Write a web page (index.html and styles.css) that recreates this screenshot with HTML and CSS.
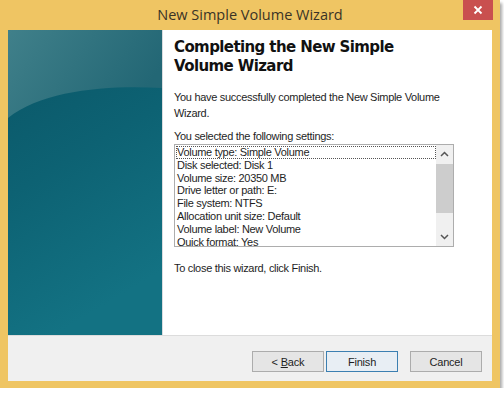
FILE: index.html
```html
<!DOCTYPE html>
<html lang="en">
<head>
    <meta charset="UTF-8">
    <title>New Simple Volume Wizard</title>
    <link rel="stylesheet" href="styles.css">
</head>
<body>

    <div class="window">
        <div class="titlebar">
            <span></span>
            <span class="title">New Simple Volume Wizard</span>
            <button class="close" type="button" aria-label="Close">
                <svg width="10" height="10" viewBox="0 0 10 10">
                    <path d="M1.5 1.5 L8.5 8.5 M8.5 1.5 L1.5 8.5" stroke="#fff" stroke-width="1.8" fill="none"/>
                </svg>
            </button>
        </div>

        <div class="client">
            <div class="main">
                <div class="side">
                    <svg width="154" height="305" viewBox="0 0 154 305" preserveAspectRatio="none">
                        <defs>
                            <linearGradient id="bg" x1="0" y1="0" x2="0.3" y2="1">
                                <stop offset="0" stop-color="#0a5566"/>
                                <stop offset="0.5" stop-color="#0d6273"/>
                                <stop offset="1" stop-color="#137283"/>
                            </linearGradient>
                            <linearGradient id="glow" x1="0" y1="0" x2="1" y2="0.4">
                                <stop offset="0" stop-color="#40808a"/>
                                <stop offset="1" stop-color="#236775"/>
                            </linearGradient>
                        </defs>
                        <rect width="154" height="305" fill="url(#bg)"/>
                        <path d="M0 0 H154 V58 C100 55 35 60 0 88 Z" fill="url(#glow)"/>
                    </svg>
                </div>
                <div class="content">
                    <h1>Completing the New Simple Volume Wizard</h1>
                    <p class="intro">You have successfully completed the New Simple Volume Wizard.</p>
                    <p class="label">You selected the following settings:</p>
                    <div class="listbox">
                        <div class="lines">
                            <div class="line focus">Volume type: Simple Volume</div>
                            <div class="line">Disk selected: Disk 1</div>
                            <div class="line">Volume size: 20350 MB</div>
                            <div class="line">Drive letter or path: E:</div>
                            <div class="line">File system: NTFS</div>
                            <div class="line">Allocation unit size: Default</div>
                            <div class="line">Volume label: New Volume</div>
                            <div class="line">Quick format: Yes</div>
                        </div>
                        <div class="scrollbar">
                            <svg class="arrow" width="9" height="6" viewBox="0 0 9 6">
                                <path d="M1 5 L4.5 1.5 L8 5" stroke="#555" stroke-width="1.5" fill="none"/>
                            </svg>
                            <div class="track"><div class="thumb"></div></div>
                            <svg class="arrow" width="9" height="6" viewBox="0 0 9 6">
                                <path d="M1 1 L4.5 4.5 L8 1" stroke="#555" stroke-width="1.5" fill="none"/>
                            </svg>
                        </div>
                    </div>
                    <p class="finish-note">To close this wizard, click Finish.</p>
                </div>
            </div>

            <div class="footer">
                <button type="button" class="btn">&lt; <u>B</u>ack</button>
                <button type="button" class="btn default">Finish</button>
                <button type="button" class="btn cancel">Cancel</button>
            </div>
        </div>
    </div>

</body>
</html>
```

FILE: styles.css
```css
body {
    margin: 0;
    background: #fff;
    font-family: "Liberation Sans", Arial, sans-serif;
}
.window {
    width: 500px;
    height: 388px;
    background: #efc563;
    box-shadow: 2px 3px 3px rgba(0, 0, 0, 0.35);
    display: flex;
    flex-direction: column;
}
.titlebar {
    height: 30px;
    display: grid;
    grid-template-columns: 1fr auto 1fr;
    align-items: start;
}
.title {
    font-family: "Open Sans", "Noto Sans", sans-serif;
    font-size: 14.5px;
    color: #3a3326;
    line-height: 30px;
}
.close {
    justify-self: end;
    margin-right: 7px;
    width: 30px;
    height: 20px;
    border: none;
    padding: 0;
    background: #c9504f;
    display: flex;
    align-items: center;
    justify-content: center;
}
.client {
    margin: 0 8px 7px 8px;
    flex: 1;
    display: flex;
    flex-direction: column;
    background: #fff;
}
.main {
    height: 305px;
    display: flex;
}
.side {
    width: 154px;
    border-right: 1px solid #d9dcdf;
}
.side svg {
    display: block;
}
.content {
    flex: 1;
    padding: 8px 0 0 11px;
    font-size: 11px;
    letter-spacing: -0.3px;
    color: #1e1e1e;
}
h1 {
    font-family: "DejaVu Sans", Verdana, sans-serif;
    font-size: 15px;
    font-weight: bold;
    letter-spacing: -0.6px;
    line-height: 19px;
    margin: 0;
    width: 240px;
    color: #111;
}
.intro {
    margin: 13px 0 0;
    line-height: 16px;
    width: 272px;
}
.label {
    margin: 8px 0 0;
    line-height: 15px;
}
.listbox {
    width: 278px;
    height: 101px;
    border: 1px solid #adadad;
    display: flex;
    overflow: hidden;
}
.lines {
    flex: 1;
    padding: 1px 0 0 1px;
    overflow: hidden;
}
.line {
    line-height: 12.8px;
    white-space: nowrap;
    padding-left: 1px;
}
.line.focus {
    outline: 1px dotted #555;
    outline-offset: -1px;
}
.scrollbar {
    width: 17px;
    background: #f0f0f0;
    display: flex;
    flex-direction: column;
    align-items: center;
}
.arrow {
    margin: 6px 0;
}
.track {
    flex: 1;
    width: 100%;
    padding: 1px 0;
}
.thumb {
    width: 100%;
    height: 49px;
    background: #cdcdcd;
}
.finish-note {
    margin: 15px 0 0;
}
.footer {
    flex: 1;
    border-top: 1px solid #dcdcdc;
    background: #f0f0f0;
    display: flex;
    align-items: flex-start;
    padding: 15px 10px 0 0;
    justify-content: flex-end;
    gap: 2px;
}
.btn {
    width: 72px;
    height: 21px;
    font-family: "Liberation Sans", Arial, sans-serif;
    font-size: 11px;
    letter-spacing: -0.2px;
    color: #1e1e1e;
    background: #e5e5e5;
    border: 1px solid #acacac;
    padding: 0;
}
.btn.default {
    border-color: #3c7fb1;
    background: #e8eef4;
}
.btn.cancel {
    margin-left: 10px;
}
```
